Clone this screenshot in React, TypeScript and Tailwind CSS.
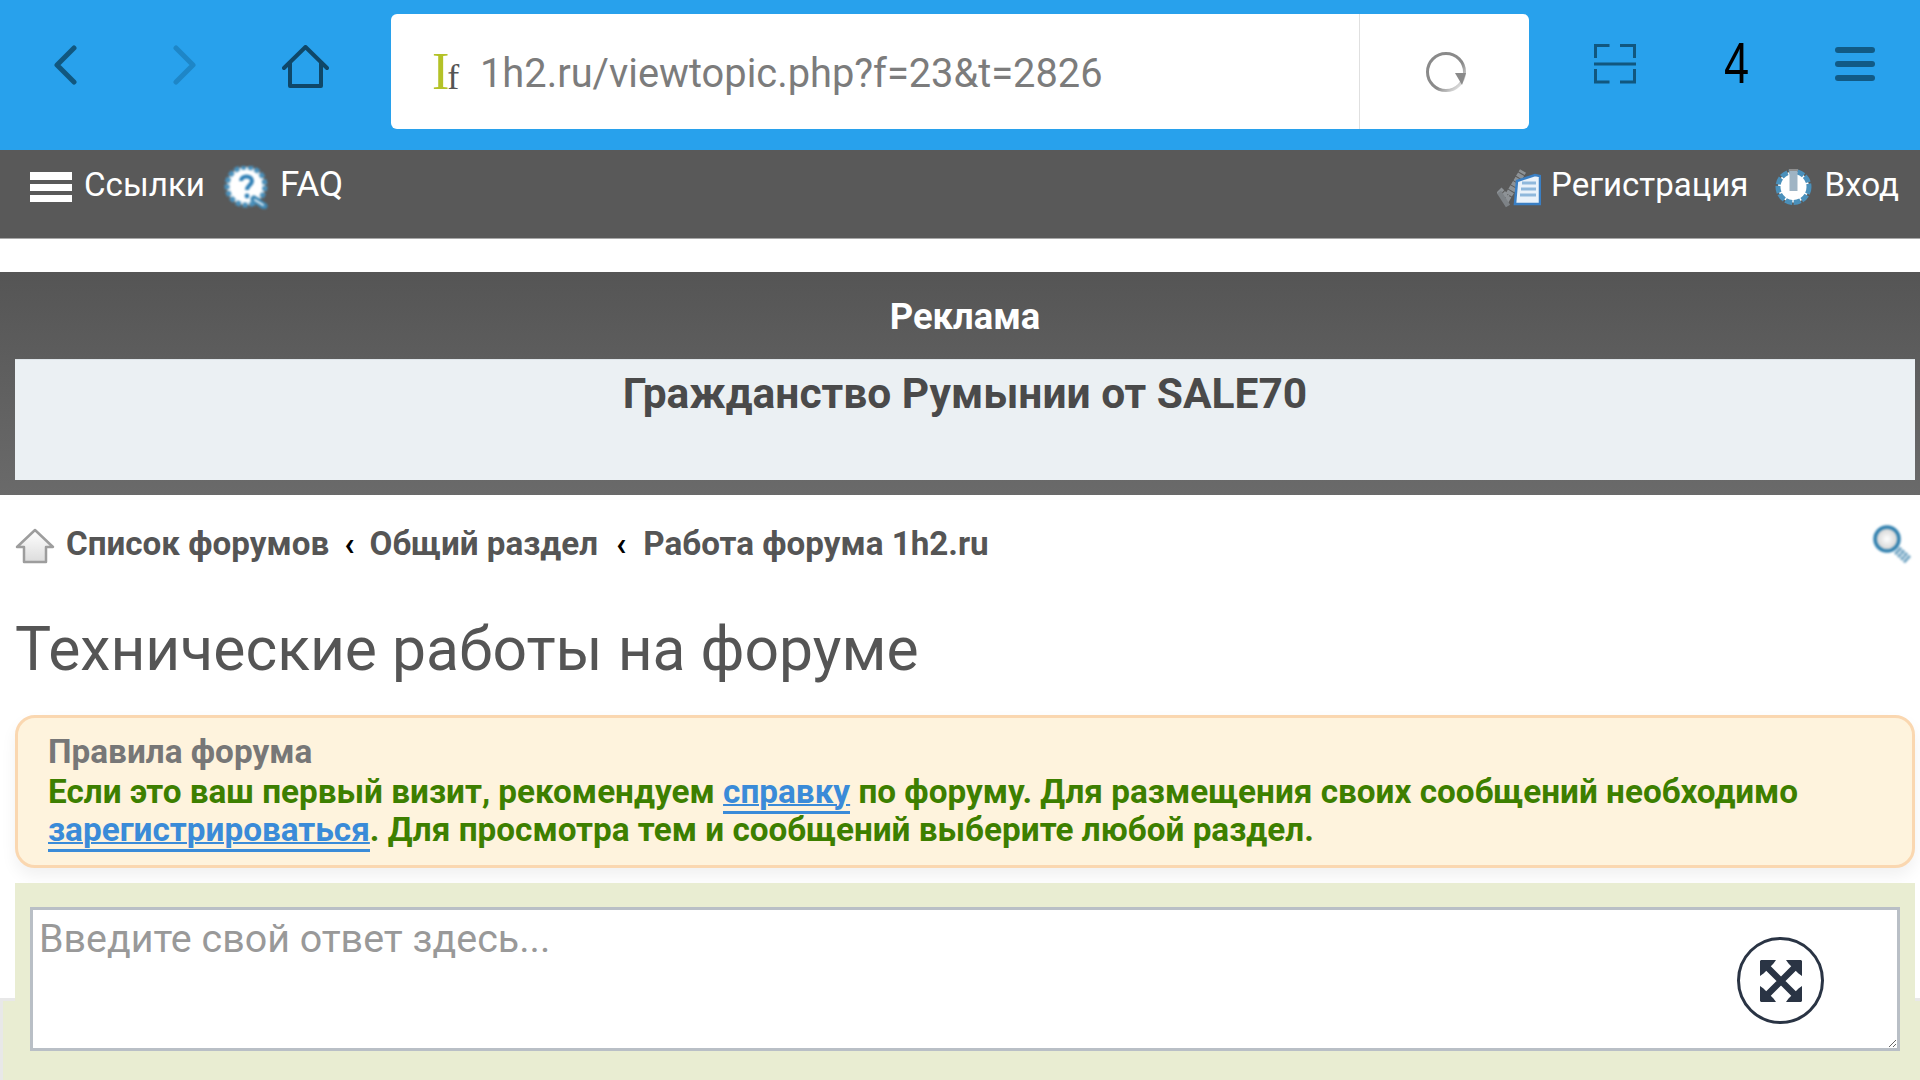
const font = "font-['Roboto',_'Noto_Sans',_sans-serif]";

function FaqIcon() {
  return (
    <svg width="50" height="43" viewBox="0 0 50 43" className="shrink-0 blur-[0.9px]">
      <circle cx="24" cy="20" r="19" fill="#ffffff" stroke="#4a90bb" strokeWidth="5" strokeDasharray="5 2" />
      <path d="M32 33l10 7" stroke="#3f88b4" strokeWidth="7" strokeLinecap="round" />
      <path d="M33 34l8 5" stroke="#e6f1f7" strokeWidth="2" strokeLinecap="round" />
      <path d="M19 15c0-6 11-6 11 0 0 4-5 4-5 9" fill="none" stroke="#2f7fb5" strokeWidth="4" />
      <circle cx="25" cy="30" r="2.4" fill="#2f7fb5" />
    </svg>
  );
}

function RegisterIcon() {
  return (
    <svg width="44" height="40" viewBox="0 0 44 40" className="shrink-0 blur-[0.7px]">
      <path d="M2 22l8 8L26 3" fill="none" stroke="#8d9296" strokeWidth="7" strokeDasharray="4 1" />
      <path d="M11 38L2 24" stroke="#7d8286" strokeWidth="5" />
      <path d="M20 13l18-6 5 1v28H18z" fill="#eaf2fa" stroke="#3a7fc4" strokeWidth="2.5" />
      <path d="M25 15h14M24 21h15M23 27h16" stroke="#8fb8dc" strokeWidth="3" />
    </svg>
  );
}

function LoginIcon() {
  return (
    <svg width="37" height="37" viewBox="0 0 37 37" className="shrink-0 blur-[0.7px]">
      <circle cx="18.5" cy="19" r="15.5" fill="#ffffff" stroke="#4a90bb" strokeWidth="5" strokeDasharray="7 1.5" />
      <path d="M18.5 2v21" stroke="#9fb4c4" strokeWidth="8" />
      <path d="M14 2h9" stroke="#8f8f8f" strokeWidth="2" />
    </svg>
  );
}

function ForumHomeIcon() {
  return (
    <svg width="40" height="36" viewBox="0 0 40 36" className="shrink-0 blur-[0.6px]">
      <defs>
        <linearGradient id="homeFill" x1="0" y1="0" x2="0" y2="1">
          <stop offset="0" stopColor="#ffffff" />
          <stop offset="1" stopColor="#dcdcdc" />
        </linearGradient>
      </defs>
      <path d="M20 2L38 19h-7v15H9V19H2z" fill="url(#homeFill)" stroke="#9d9d9d" strokeWidth="2.5" strokeLinejoin="round" />
    </svg>
  );
}

function SearchIcon() {
  return (
    <svg width="40" height="38" viewBox="0 0 40 38" className="shrink-0 blur-[0.8px]">
      <defs>
        <radialGradient id="lens" cx="0.5" cy="0.5" r="0.5">
          <stop offset="0" stopColor="#ffffff" />
          <stop offset="1" stopColor="#cfcfcf" />
        </radialGradient>
      </defs>
      <circle cx="15" cy="14" r="12" fill="url(#lens)" stroke="#2f7fae" strokeWidth="3.5" />
      <path d="M25 25l11 10" stroke="#6fa3c2" strokeWidth="9" strokeDasharray="3 1" />
      <path d="M27 27l7 6.500" stroke="#d5e3ec" strokeWidth="3" strokeDasharray="2 2" />
    </svg>
  );
}

function BrowserBar() {
  return (
    <div className="flex h-[150px] bg-[#28a1ec]">
      <div className="flex w-[391px] shrink-0 pl-[53px] pt-[45px]">
        <svg width="24" height="40" viewBox="0 0 24 40" className="mr-[96px] shrink-0">
          <path d="M21 3L4 20l17 17" fill="none" stroke="#11577f" strokeWidth="5" strokeLinecap="round" strokeLinejoin="round" />
        </svg>
        <svg width="24" height="40" viewBox="0 0 24 40" className="mr-[85px] shrink-0">
          <path d="M3 3l17 17L3 37" fill="none" stroke="#1e86c7" strokeWidth="5" strokeLinecap="round" strokeLinejoin="round" />
        </svg>
        <svg width="47" height="43" viewBox="0 0 47 43" className="shrink-0">
          <path d="M2 23L23.5 2 45 23M8 18v23h31V18" fill="none" stroke="#0f4768" strokeWidth="4" strokeLinecap="round" strokeLinejoin="round" />
        </svg>
      </div>

      <div className="mt-[14px] flex h-[115px] w-[1138px] shrink-0 rounded-[6px] bg-white">
        <div className="flex w-[969px] items-center border-r border-[#e0e0e0] pl-[41px]">
          <span className="flex w-[48px] items-end font-['Liberation_Serif',_serif] leading-none">
            <span className="text-[52px] text-[#b4c227]">I</span>
            <span className="mb-[3px] ml-[-2px] text-[36px] text-[#555555]">f</span>
          </span>
          <span className={`${font} mt-[5px] text-[39.8px] text-[#7c7c7c]`}>1h2.ru/viewtopic.php?f=23&amp;t=2826</span>
        </div>
        <div className="flex flex-1 items-center justify-center pl-[2px]">
          <svg width="42" height="42" viewBox="0 0 42 42" className="mt-[1px]">
            <defs>
              <linearGradient id="reload" x1="0" y1="0" x2="1" y2="1">
                <stop offset="0.6" stopColor="#8a8a8a" />
                <stop offset="1" stopColor="#ffffff" />
              </linearGradient>
            </defs>
            <circle cx="21" cy="21" r="18.5" fill="none" stroke="url(#reload)" strokeWidth="3" />
            <path d="M30 22h11l-4 12z" fill="#8a8a8a" />
          </svg>
        </div>
      </div>

      <div className="flex flex-1 items-start pl-[65px] pt-[42px]">
        <svg width="42" height="42" viewBox="0 0 42 42" className="shrink-0">
          <path d="M1.500 16V3.500h14M26 3.500h14.500V16M0 22h42M1.500 27v13h14M26 40h14.500V27" fill="none" stroke="#11577f" strokeWidth="3" />
        </svg>
        <span className="ml-[88px] w-[24px] origin-top-left scale-x-[0.82] scale-y-[1.04] font-['Liberation_Sans',_sans-serif] text-[55px] leading-[40px] text-black">4</span>
        <div className="ml-[87px] mt-[5px] flex w-[40px] flex-col gap-[8px]">
          <div className="h-[6px] rounded-full bg-[#115a85]" />
          <div className="h-[6px] rounded-full bg-[#115a85]" />
          <div className="h-[6px] rounded-full bg-[#115a85]" />
        </div>
      </div>
    </div>
  );
}

function NavBar() {
  return (
    <div className={`${font} flex h-[89px] items-start justify-between border-b border-[#a8a8a8] bg-[#595959] pt-[16px] text-[33.200px] leading-[38px] text-white`}>
      <div className="flex items-start pl-[30px]">
        <div className="mt-[6px] flex w-[42px] flex-col gap-[4px]">
          <div className="h-[8px] bg-white" />
          <div className="h-[7px] bg-white" />
          <div className="h-[7px] bg-white" />
        </div>
        <span className="ml-[12px]">Ссылки</span>
        <span className="ml-[17px] flex items-start gap-[8px]">
          <FaqIcon />
          <span className="text-[35px]">FAQ</span>
        </span>
      </div>
      <div className="flex items-start pr-[21px]">
        <span className="flex items-start gap-[10px]">
          <span className="mt-[2px]"><RegisterIcon /></span>
          <span className="text-[33px]">Регистрация</span>
        </span>
        <span className="ml-[27px] flex items-start gap-[12px]">
          <span className="mt-[2px]"><LoginIcon /></span>
          Вход
        </span>
      </div>
    </div>
  );
}

function AdBlock() {
  return (
    <div className="mt-[33px] bg-gradient-to-b from-[#555555] to-[#6a6a6a] pb-[15px] pl-[15px] pr-[5px]">
      <div className="flex h-[87px] items-center justify-center pt-[3px] text-[36.400px] font-bold text-white">Реклама</div>
      <div className="h-[121px] border-t border-[#dfe5e9] bg-[#ebf0f3] pt-[10px] text-center text-[42.500px] leading-[48px] font-bold text-[#4a4a4a]">
        Гражданство Румынии от SALE70
      </div>
    </div>
  );
}

function Breadcrumbs() {
  return (
    <div className="flex h-[98px] items-start pl-[15px] pr-[8px] pt-[33px] text-[33.200px] leading-[32px] font-bold text-[#555555]">
      <ForumHomeIcon />
      <span className="ml-[11px]">Список форумов</span>
      <span className="mx-[15px] text-black">‹</span>
      <span>Общий раздел</span>
      <span className="ml-[18px] mr-[17px] text-black">‹</span>
      <span>Работа форума 1h2.ru</span>
      <span className="ml-auto mt-[-3px]"><SearchIcon /></span>
    </div>
  );
}

function Rules() {
  return (
    <div className="ml-[15px] mr-[5px] mt-[3px] h-[153px] rounded-[20px] border-[3px] border-[#fad7b0] bg-[#fef3dd] pl-[30px] pt-[15px] text-[33.300px] leading-[38.500px] font-bold text-[#3d7f00] shadow-[0_8px_16px_rgba(0,0,0,0.06)]">
      <div className="mb-[1px] text-[#777777]">Правила форума</div>
      <div>
        Если это ваш первый визит, рекомендуем{" "}
        <a className="border-b-[3px] border-[#3a8bd8] text-[#3a8bd8] underline decoration-2">справку</a>{" "}
        по форуму. Для размещения своих сообщений необходимо
      </div>
      <div>
        <a className="border-b-[3px] border-[#3a8bd8] text-[#3a8bd8] underline decoration-2">зарегистрироваться</a>
        . Для просмотра тем и сообщений выберите любой раздел.
      </div>
    </div>
  );
}

function ReplyForm() {
  return (
    <div className="relative mt-[15px] h-[197px] bg-white">
      <div className="absolute inset-x-0 bottom-0 top-[115px] border-l-[3px] border-t-[3px] border-[#e8e8e8] bg-[#e9edd2]" />
      <div className="relative ml-[15px] mr-[5px] h-full bg-[#e9edd2] px-[15px] pt-[24px]">
        <div className="relative h-[144px]">
          <textarea
            placeholder="Введите свой ответ здесь..."
            className="block h-full w-full border-[3px] border-[#b9bfc6] bg-white px-[6px] pb-[3px] pt-[5px] text-[39.400px] leading-[48px] outline-none placeholder:text-[#999999]"
          />
          <button
            type="button"
            className="absolute right-[76px] top-[30px] flex h-[87px] w-[87px] items-center justify-center rounded-full border-[3px] border-[#2a3444]"
          >
            <svg width="42" height="42" viewBox="0 0 42 42">
              <path d="M6 6l30 30M36 6L6 36" stroke="#2a3444" strokeWidth="6.500" />
              <path d="M1 0h15l-2.500 3.500L3.500 13.500 0 16V1zM41 0H26l2.500 3.500 10 10L42 16V1zM1 42h15l-2.500-3.500-10-10L0 26v15zM41 42H26l2.500-3.500 10-10L42 26v15z" fill="#2a3444" />
            </svg>
          </button>
        </div>
      </div>
    </div>
  );
}

export default function App() {
  return (
    <div className={`${font} h-[1080px] w-[1920px] overflow-hidden bg-white`}>
      <BrowserBar />
      <NavBar />
      <AdBlock />
      <Breadcrumbs />
      <h1 className="h-[119px] pl-[15px] pt-[24px] text-[60.600px] leading-[66px] font-normal text-[#555555]">Технические работы на форуме</h1>
      <Rules />
      <ReplyForm />
    </div>
  );
}
